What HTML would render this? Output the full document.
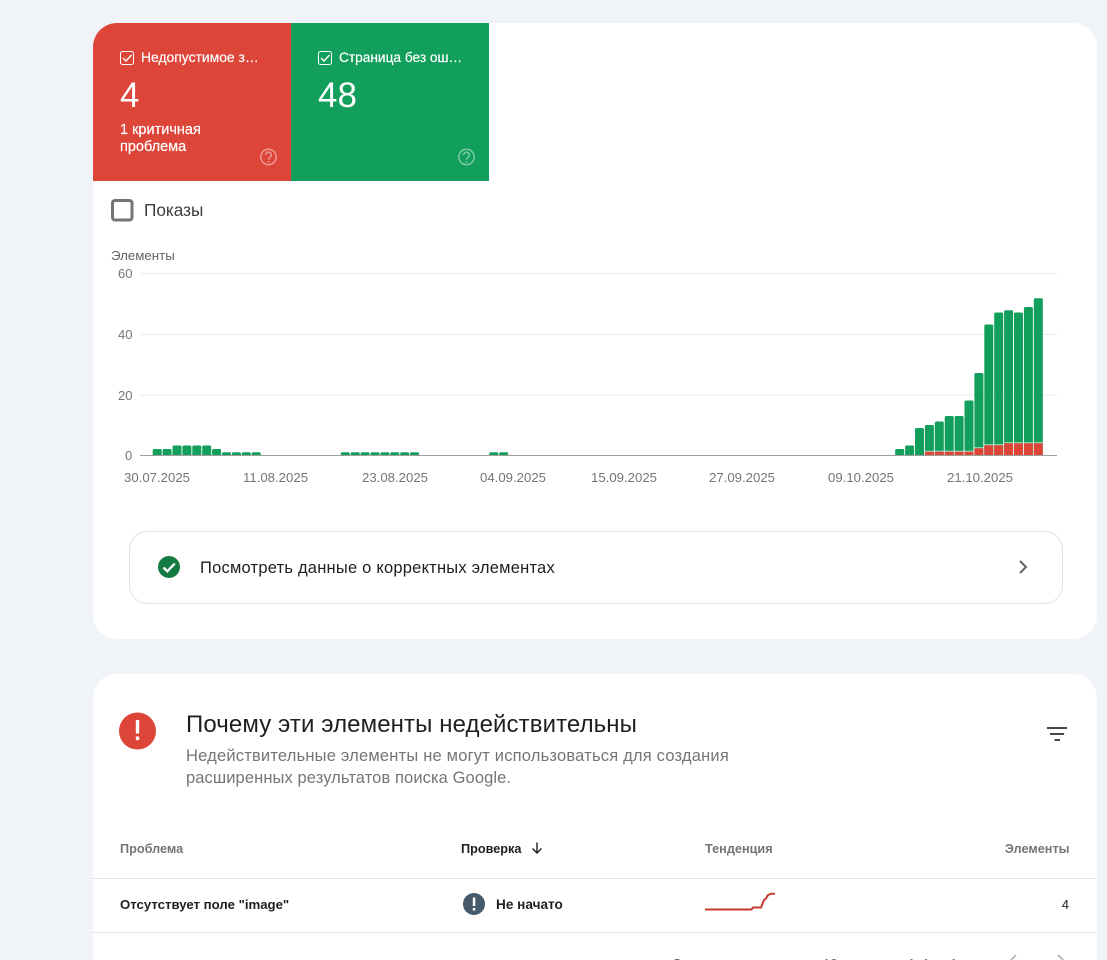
<!DOCTYPE html>
<html lang="ru">
<head>
<meta charset="utf-8">
<title>Отчёт</title>
<style>
html,body{margin:0;padding:0;width:1107px;height:960px;overflow:hidden;background:#f0f4f9;font-family:"Liberation Sans",sans-serif;color:#1f1f1f}
#w{position:absolute;left:0;top:0;width:1107px;height:960px;overflow:hidden}
.card{position:absolute;left:93px;width:1004px;background:#fff;border-radius:24px;overflow:hidden}
.t{position:absolute;white-space:nowrap;line-height:1}
.s{-webkit-text-stroke:.2px currentColor}
svg{position:absolute;overflow:visible}
.b rect{width:9px}
</style>
</head>
<body>
<div id="w">
<div class="card" style="top:23px;height:616px"></div>
<div class="card" style="top:674px;height:286px;border-radius:24px 24px 0 0"></div>
<div style="position:absolute;left:93px;top:23px;width:198px;height:158px;background:#dd4539;border-top-left-radius:24px"></div>
<div style="position:absolute;left:291px;top:23px;width:198px;height:158px;background:#119f5b"></div>
<div style="position:absolute;left:93px;width:1004px;top:878px;height:1px;background:#e0e0e0"></div>
<div style="position:absolute;left:93px;width:1004px;top:932px;height:1px;background:#e0e0e0"></div>

<svg style="left:0;top:0" width="1107" height="960" viewBox="0 0 1107 960">
<rect x="120.5" y="51.5" width="13" height="13" rx="2" fill="none" stroke="#fff"/>
<path d="M123 58l3 3 5.500-6" fill="none" stroke="#fff" stroke-width="1.400"/>
<rect x="318.500" y="51.500" width="13" height="13" rx="2" fill="none" stroke="#fff"/>
<path d="M321 58l3 3 5.500-6" fill="none" stroke="#fff" stroke-width="1.400"/>
<g fill="none" stroke="#fff" stroke-opacity=".45" stroke-width="1.500">
<circle cx="268.500" cy="157" r="7.700"/><circle cx="466.500" cy="157" r="7.700"/>
<path d="M265.700 155a2.800 2.800 0 1 1 4.500 2.200c-1 .8-1.700 1.200-1.700 2.500"/>
<path d="M463.700 155a2.800 2.800 0 1 1 4.500 2.200c-1 .8-1.700 1.200-1.700 2.500"/>
</g>
<circle cx="268.500" cy="161.800" r=".9" fill="#fff" fill-opacity=".5"/><circle cx="466.500" cy="161.800" r=".9" fill="#fff" fill-opacity=".5"/>
<rect x="112.500" y="200.500" width="19.500" height="19.500" rx="2.500" fill="#fff" stroke="#757575" stroke-width="3"/>

<g stroke="#ebebeb" stroke-width="1"><line x1="140" x2="1057" y1="273.500" y2="273.500"/><line x1="140" x2="1057" y1="334.500" y2="334.500"/><line x1="140" x2="1057" y1="395" y2="395"/></g>
<defs><clipPath id="c"><rect x="140" y="200" width="920" height="255.500"/></clipPath></defs>
<g clip-path="url(#c)" fill="#119f5b" class="b">
<rect x="152.700" y="449" width="9.200" height="12" rx="1.500"/><rect x="162.600" y="449" width="9.200" height="12" rx="1.500"/>
<rect x="172.500" y="445.500" width="9.200" height="15" rx="1.500"/><rect x="182.400" y="445.500" width="9.200" height="15" rx="1.500"/><rect x="192.300" y="445.500" width="9.200" height="15" rx="1.500"/><rect x="202.200" y="445.500" width="9.200" height="15" rx="1.500"/>
<rect x="212.100" y="449" width="9.200" height="12" rx="1.500"/>
<rect x="222" y="452.300" width="9.200" height="8" rx="1.500"/><rect x="231.900" y="452.300" width="9.200" height="8" rx="1.500"/><rect x="241.800" y="452.300" width="9.200" height="8" rx="1.500"/><rect x="251.700" y="452.300" width="9.200" height="8" rx="1.500"/>
<rect x="340.800" y="452.300" width="9.200" height="8" rx="1.500"/><rect x="350.700" y="452.300" width="9.200" height="8" rx="1.500"/><rect x="360.600" y="452.300" width="9.200" height="8" rx="1.500"/><rect x="370.500" y="452.300" width="9.200" height="8" rx="1.500"/><rect x="380.400" y="452.300" width="9.200" height="8" rx="1.500"/><rect x="390.300" y="452.300" width="9.200" height="8" rx="1.500"/><rect x="400.200" y="452.300" width="9.200" height="8" rx="1.500"/><rect x="410.100" y="452.300" width="9.200" height="8" rx="1.500"/>
<rect x="489.300" y="452.300" width="9.200" height="8" rx="1.500"/><rect x="499.200" y="452.300" width="9.200" height="8" rx="1.500"/>
<rect x="895.200" y="449" width="9.200" height="12" rx="1.500"/>
<rect x="905.100" y="445.500" width="9.200" height="15" rx="1.500"/>
<rect x="915" y="428" width="9.200" height="32" rx="1.500"/>
<rect x="924.900" y="425" width="9.200" height="35" rx="1.500"/>
<rect x="934.800" y="421.500" width="9.200" height="39" rx="1.500"/>
<rect x="944.700" y="416" width="9.200" height="44" rx="1.500"/>
<rect x="954.600" y="416" width="9.200" height="44" rx="1.500"/>
<rect x="964.500" y="400.500" width="9.200" height="60" rx="1.500"/>
<rect x="974.400" y="373" width="9.200" height="87" rx="1.500"/>
<rect x="984.300" y="324.500" width="9.200" height="136" rx="1.500"/>
<rect x="994.200" y="312.500" width="9.200" height="148" rx="1.500"/>
<rect x="1004.100" y="310.300" width="9.200" height="150" rx="1.500"/>
<rect x="1014" y="312.500" width="9.200" height="148" rx="1.500"/>
<rect x="1023.900" y="307" width="9.200" height="153" rx="1.500"/>
<rect x="1033.800" y="298.300" width="9.200" height="162" rx="1.500"/>
</g>
<g fill="#fff" fill-opacity=".75" class="b">
<rect x="924.900" y="450.700" width="9.200" height="1"/><rect x="934.800" y="450.700" width="9.200" height="1"/><rect x="944.700" y="450.700" width="9.200" height="1"/><rect x="954.600" y="450.700" width="9.200" height="1"/><rect x="964.500" y="450.700" width="9.200" height="1"/><rect x="974.400" y="447.300" width="9.200" height="1"/><rect x="984.300" y="444.300" width="9.200" height="1"/><rect x="994.200" y="444.300" width="9.200" height="1"/><rect x="1004.100" y="442.300" width="9.200" height="1"/><rect x="1014" y="442.300" width="9.200" height="1"/><rect x="1023.900" y="442.300" width="9.200" height="1"/><rect x="1033.800" y="442.300" width="9.200" height="1"/>
</g>
<g fill="#dd4539" class="b">
<rect x="924.900" y="451.700" width="9.200" height="3.800"/><rect x="934.800" y="451.700" width="9.200" height="3.800"/><rect x="944.700" y="451.700" width="9.200" height="3.800"/><rect x="954.600" y="451.700" width="9.200" height="3.800"/><rect x="964.500" y="451.700" width="9.200" height="3.800"/><rect x="974.400" y="448.300" width="9.200" height="7.200"/><rect x="984.300" y="445.300" width="9.200" height="10.200"/><rect x="994.200" y="445.300" width="9.200" height="10.200"/><rect x="1004.100" y="443.300" width="9.200" height="12.200"/><rect x="1014" y="443.300" width="9.200" height="12.200"/><rect x="1023.900" y="443.300" width="9.200" height="12.200"/><rect x="1033.800" y="443.300" width="9.200" height="12.200"/>
</g>
<line x1="140" x2="1057" y1="455.500" y2="455.500" stroke="#9e9e9e"/>

<rect x="129.500" y="531.500" width="933" height="72" rx="18" fill="#fff" stroke="#e0e0e0"/>
<circle cx="169" cy="567" r="11" fill="#137b41"/>
<path d="M163.500 567.500l3.800 3.800 7.500-7.800" fill="none" stroke="#fff" stroke-width="2.300"/>
<path d="M1020 561l6 6-6 6" fill="none" stroke="#5f6368" stroke-width="2"/>

<circle cx="137.500" cy="731" r="18.500" fill="#dd4539"/>
<rect x="135.800" y="720" width="3.400" height="13.500" rx=".6" fill="#fff"/>
<rect x="135.800" y="736.500" width="3.400" height="3.600" rx=".6" fill="#fff"/>
<g fill="#444746"><rect x="1047" y="727" width="20" height="2"/><rect x="1050" y="733" width="14" height="2"/><rect x="1054.500" y="739" width="5.500" height="2"/></g>

<path d="M537 842.500v10.500M532.500 848.500l4.500 4.500 4.500-4.500" fill="none" stroke="#1f1f1f" stroke-width="1.400"/>
<circle cx="474" cy="904" r="11" fill="#455a6b"/>
<rect x="472.800" y="897.500" width="2.500" height="8.500" fill="#fff"/><rect x="472.800" y="908" width="2.500" height="2.500" fill="#fff"/>
<path d="M705 909.500H751.500L753 907.500H761L764 900L766 898.500L768 895L771 893.800H775" fill="none" stroke="#c9382c" stroke-width="2"/>
<path d="M1016 955l-6 6M1058 955l6 6" fill="none" stroke="#bdbdbd" stroke-width="2"/>
</svg>

<div class="t s" style="left:141px;top:51px;font-size:13.900px;color:#fff">Недопустимое з…</div>
<div class="t s" style="left:339px;top:51px;font-size:13.700px;color:#fff">Страница без ош…</div>
<div class="t" style="left:120px;top:78px;font-size:35px;color:#fff">4</div>
<div class="t" style="left:318px;top:78px;font-size:35px;color:#fff">48</div>
<div class="t s" style="left:120px;top:122px;font-size:14.500px;color:#fff;line-height:17px">1 критичная<br>проблема</div>
<div class="t" style="left:144px;top:202px;font-size:17.200px;color:#3c4043">Показы</div>

<div class="t" style="left:111px;top:249px;font-size:13.300px;color:#5f6368">Элементы</div>
<div class="t" style="left:118px;top:267px;font-size:13px;color:#757575">60</div>
<div class="t" style="left:118px;top:328px;font-size:13px;color:#757575">40</div>
<div class="t" style="left:118px;top:389px;font-size:13px;color:#757575">20</div>
<div class="t" style="left:125px;top:449px;font-size:13px;color:#757575">0</div>
<div class="t" style="left:124px;top:471px;font-size:13.200px;color:#757575">30.07.2025</div>
<div class="t" style="left:243px;top:471px;font-size:13.200px;color:#757575">11.08.2025</div>
<div class="t" style="left:362px;top:471px;font-size:13.200px;color:#757575">23.08.2025</div>
<div class="t" style="left:480px;top:471px;font-size:13.200px;color:#757575">04.09.2025</div>
<div class="t" style="left:591px;top:471px;font-size:13.200px;color:#757575">15.09.2025</div>
<div class="t" style="left:709px;top:471px;font-size:13.200px;color:#757575">27.09.2025</div>
<div class="t" style="left:828px;top:471px;font-size:13.200px;color:#757575">09.10.2025</div>
<div class="t" style="left:947px;top:471px;font-size:13.200px;color:#757575">21.10.2025</div>

<div class="t" style="left:200px;top:560px;font-size:16.500px;letter-spacing:.22px;color:#1f1f1f">Посмотреть данные о корректных элементах</div>

<div class="t" style="left:186px;top:713px;font-size:24px;letter-spacing:.1px;color:#1f1f1f">Почему эти элементы недействительны</div>
<div class="t" style="left:186px;top:748px;font-size:16.500px;letter-spacing:.2px;color:#757575">Недействительные элементы не могут использоваться для создания</div>
<div class="t" style="left:186px;top:770px;font-size:16.500px;letter-spacing:.1px;color:#757575">расширенных результатов поиска Google.</div>

<div class="t" style="left:120px;top:843px;font-size:12.700px;font-weight:bold;color:#757575">Проблема</div>
<div class="t" style="left:461px;top:843px;font-size:12.700px;font-weight:bold;color:#1f1f1f">Проверка</div>
<div class="t" style="left:705px;top:843px;font-size:12.700px;font-weight:bold;color:#757575">Тенденция</div>
<div class="t" style="right:37.500px;top:843px;font-size:12.700px;font-weight:bold;color:#757575">Элементы</div>
<div class="t" style="left:120px;top:898px;font-size:13.200px;font-weight:bold;color:#1f1f1f">Отсутствует поле "image"</div>
<div class="t" style="left:496px;top:898px;font-size:13.600px;font-weight:bold;color:#1f1f1f">Не начато</div>
<div class="t" style="right:38px;top:898px;font-size:13px;color:#1f1f1f">4</div>

<div class="t" style="left:672px;top:957px;font-size:13px;color:#5f6368">Строк на странице:</div>
<div class="t" style="left:823px;top:957px;font-size:13px;color:#5f6368">10</div>
<div class="t" style="left:908px;top:957px;font-size:13px;color:#5f6368">1–1 из 1</div>
</div>
</body>
</html>
